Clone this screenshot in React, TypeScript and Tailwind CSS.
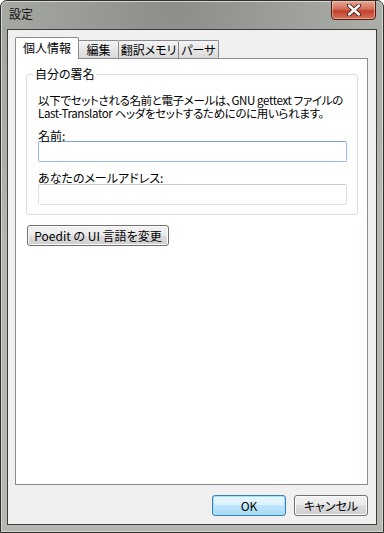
import React from "react";

const font = "font-['Noto_Sans_CJK_JP',sans-serif] [font-feature-settings:'palt']";

function Tab({ label, active, w }: { label: string; active?: boolean; w: number }) {
  if (active) {
    return (
      <div
        className="relative z-10 h-[22px] mb-[-1px] bg-white border border-b-0 border-[#898c95] rounded-t-[2px] flex items-center justify-center text-[12px] leading-[12px] text-black pb-[2px]"
        style={{ width: w }}
      >
        {label}
      </div>
    );
  }
  return (
    <div
      className="h-[18px] border border-l-0 border-b-0 border-[#898c95] rounded-tr-[2px] bg-[linear-gradient(#f4f4f4,#e7e7e7_50%,#d9d9d9)] flex items-center justify-center text-[12px] leading-[12px] text-black"
      style={{ width: w }}
    >
      {label}
    </div>
  );
}

function WinButton({ children, w, def }: { children: React.ReactNode; w: number; def?: boolean }) {
  return (
    <div
      className={
        "h-[21px] rounded-[3px] border flex items-center justify-center text-[12px] leading-[12px] text-black " +
        (def
          ? "border-[#3c7fb1] bg-[linear-gradient(#eaf6fd,#d9f0fc_50%,#bee6fd_50%,#a7d9f5)] shadow-[inset_0_0_0_1px_#9ee3ff]"
          : "border-[#707070] bg-[linear-gradient(#f2f2f2,#ebebeb_50%,#dddddd_50%,#cfcfcf)] shadow-[inset_0_0_0_1px_#fcfcfc]")
      }
      style={{ width: w }}
    >
      {children}
    </div>
  );
}

export default function App() {
  return (
    <div
      className={
        "w-[384px] h-[533px] flex flex-col rounded-t-[7px] border border-[#303030] overflow-hidden bg-[radial-gradient(ellipse_70%_60%_at_45%_0%,#8c8d89_0%,#a2a4a0_55%,#b5b7b3_100%)] shadow-[inset_0_0_0_1px_#d4d6d2] " +
        font
      }
    >
      {/* Title bar */}
      <div className="h-[28px] relative flex items-start shrink-0">
        <div className="pl-[8px] pt-[6px] text-[12px] leading-[14px] text-[#111]">設定</div>
        <div className="absolute right-[7px] top-[-1px] w-[45px] h-[20px] rounded-b-[4px] border border-[#4e1a12] bg-[linear-gradient(#e8a795,#d36d58_45%,#c2402c_55%,#d2745c)] shadow-[inset_0_0_0_1px_rgba(255,220,200,0.5)] flex items-center justify-center">
          <svg width="16" height="12" viewBox="0 0 16 12">
            <path d="M3 1.5 L13 10.5 M13 1.5 L3 10.5" stroke="#3a1d16" strokeWidth="4.2" strokeLinecap="round" />
            <path d="M3 1.5 L13 10.5 M13 1.5 L3 10.5" stroke="#ffffff" strokeWidth="2.4" strokeLinecap="round" />
          </svg>
        </div>
      </div>
      {/* Client frame */}
      <div className="flex-1 px-[6px] pb-[7px] flex flex-col">
        <div className="flex-1 border border-[#3c3c3c] bg-[#f0f0f0] flex flex-col pt-[7px] pl-[7px] pr-[8px] pb-[8px]">
          {/* tabs */}
          <div className="flex items-end h-[21px] shrink-0">
            <Tab label="個人情報" active w={64} />
            <Tab label="編集" w={40} />
            <Tab label="翻訳メモリ" w={60} />
            <Tab label="パーサ" w={40} />
          </div>
          {/* panel */}
          <div className="flex-1 bg-white border border-[#898c95] pl-[10px] pr-[9px] pt-[15px] flex flex-col text-[12px] text-black">
            <div className="relative border border-[#d5dfe5] rounded-[3px] pt-[19px] pl-[11px] pr-[10px] pb-[9px]">
              <span className="absolute left-[7px] top-[-8px] bg-white px-[1px] text-[12px] leading-[14px]">
                自分の署名
              </span>
              <div className="text-[11.5px] leading-[13px] tracking-[-0.35px] whitespace-nowrap">
                <div>以下でセットされる名前と電子メールは、GNU gettext ファイルの</div>
                <div>Last-Translator ヘッダをセットするためにのに用いられます。</div>
              </div>
              <div className="mt-[10px] leading-[12px]">名前:</div>
              <div className="mt-[-1px] h-[21px] border border-[#98bbdf] border-t-[#7ea6cf] rounded-[2px] bg-white" />
              <div className="mt-[10px] leading-[12px]">あなたのメールアドレス:</div>
              <div className="h-[21px] border border-[#dde1e6] border-t-[#c9ced5] rounded-[2px] bg-white" />
            </div>
            <div className="mt-[10px] ml-[1px]">
              <WinButton w={142}>Poedit の UI 言語を変更</WinButton>
            </div>
          </div>
          {/* buttons */}
          <div className="mt-[10px] flex justify-end gap-[8px] shrink-0">
            <WinButton w={74} def>
              OK
            </WinButton>
            <WinButton w={74}>キャンセル</WinButton>
          </div>
        </div>
      </div>
    </div>
  );
}
